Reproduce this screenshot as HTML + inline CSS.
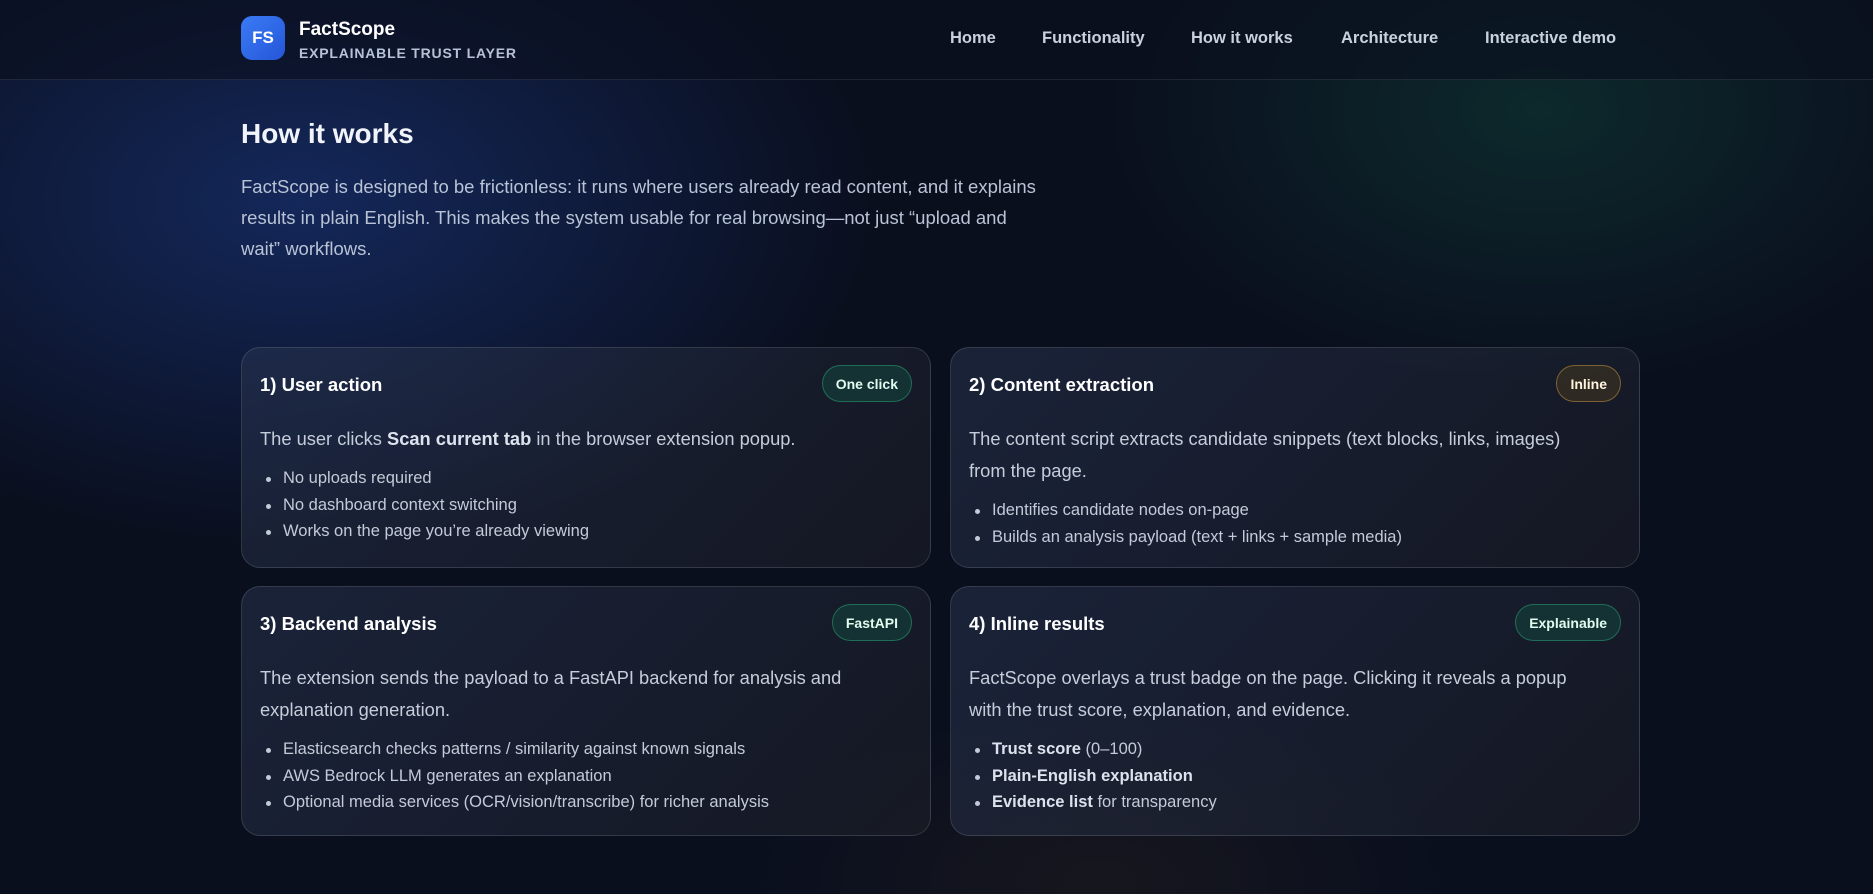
<!DOCTYPE html>
<html><head><meta charset="utf-8"><style>
*{margin:0;padding:0;box-sizing:border-box}
html,body{width:1873px;height:894px;overflow:hidden}
body{font-family:"Liberation Sans",sans-serif;color:#e6ebf5;
background:
radial-gradient(ellipse 800px 480px at 300px 200px,rgba(30,64,150,.5),transparent 72%),
radial-gradient(ellipse 600px 380px at 1540px 110px,rgba(20,110,80,.28),transparent 72%),
radial-gradient(ellipse 500px 250px at 1100px 880px,rgba(90,60,30,.16),transparent 70%),
#0a0f1e;position:relative}
header{height:80px;border-bottom:1px solid rgba(255,255,255,.09);background:rgba(10,15,30,.6);position:relative}
.logo{position:absolute;left:241px;top:16px;width:44px;height:44px;border-radius:11px;background:linear-gradient(135deg,#3b7bf5,#2456d8);color:#fff;font-weight:700;font-size:17px;display:flex;align-items:center;justify-content:center}
.bn{position:absolute;left:299px;top:19px;font-size:19px;font-weight:700;color:#fff}
.bs{position:absolute;left:299px;top:45px;font-size:14px;font-weight:700;color:#b8c2d6;letter-spacing:.8px}
nav a{position:absolute;top:29px;font-size:16.5px;font-weight:700;color:#c9d1e0;text-decoration:none}
h1{position:absolute;left:241px;top:118px;font-size:28px;font-weight:700;color:#f1f4fa}
.intro{position:absolute;left:241px;top:171px;width:800px;font-size:18.5px;line-height:31px;color:#b9c3d6}
.card{position:absolute;width:690px;border:1px solid rgba(255,255,255,.13);border-radius:19px;background:linear-gradient(135deg,rgba(40,52,80,.55),rgba(30,32,40,.55));padding:0 18px}
.card h3{position:absolute;left:18px;top:26px;font-size:18.5px;font-weight:700;color:#fff}
.badge{position:absolute;right:18px;top:17px;height:37px;border-radius:19px;padding:0 13px;font-size:14px;font-weight:700;display:flex;align-items:center;color:#e2fbef;background:rgba(20,70,60,.55);border:1px solid rgba(40,150,110,.6)}
.badge.g{color:#fff4dc;background:rgba(70,55,30,.5);border-color:rgba(170,130,60,.65)}
.body{position:absolute;left:18px;right:50px;top:75px;font-size:18.3px;line-height:32px;color:#c6cdda}
.body b{color:#dde3ee}
ul{list-style:none;margin-top:10px}
li{font-size:16.5px;line-height:26.5px;color:#c3cad8;padding-left:23px;position:relative}
li:before{content:"";position:absolute;left:6px;top:12px;width:5px;height:5px;border-radius:50%;background:#c3cad8}
li b{color:#dde3ee}
</style></head><body>
<header>
<div class="logo">FS</div>
<div class="bn">FactScope</div>
<div class="bs">EXPLAINABLE TRUST LAYER</div>
<nav><a style="left:950px">Home</a><a style="left:1042px">Functionality</a><a style="left:1191px">How it works</a><a style="left:1341px">Architecture</a><a style="left:1485px">Interactive demo</a></nav>
</header>
<h1>How it works</h1>
<p class="intro">FactScope is designed to be frictionless: it runs where users already read content, and it explains results in plain English. This makes the system usable for real browsing—not just “upload and wait” workflows.</p>

<div class="card" style="left:241px;top:347px;height:221px">
<h3>1) User action</h3><div class="badge">One click</div>
<div class="body">The user clicks <b>Scan current tab</b> in the browser extension popup.
<ul><li>No uploads required</li><li>No dashboard context switching</li><li>Works on the page you’re already viewing</li></ul></div></div>

<div class="card" style="left:950px;top:347px;height:221px">
<h3>2) Content extraction</h3><div class="badge g">Inline</div>
<div class="body">The content script extracts candidate snippets (text blocks, links, images) from the page.
<ul><li>Identifies candidate nodes on-page</li><li>Builds an analysis payload (text + links + sample media)</li></ul></div></div>

<div class="card" style="left:241px;top:586px;height:250px">
<h3>3) Backend analysis</h3><div class="badge">FastAPI</div>
<div class="body">The extension sends the payload to a FastAPI backend for analysis and explanation generation.
<ul><li>Elasticsearch checks patterns / similarity against known signals</li><li>AWS Bedrock LLM generates an explanation</li><li>Optional media services (OCR/vision/transcribe) for richer analysis</li></ul></div></div>

<div class="card" style="left:950px;top:586px;height:250px">
<h3>4) Inline results</h3><div class="badge">Explainable</div>
<div class="body">FactScope overlays a trust badge on the page. Clicking it reveals a popup with the trust score, explanation, and evidence.
<ul><li><b>Trust score</b> (0–100)</li><li><b>Plain-English explanation</b></li><li><b>Evidence list</b> for transparency</li></ul></div></div>
</body></html>
